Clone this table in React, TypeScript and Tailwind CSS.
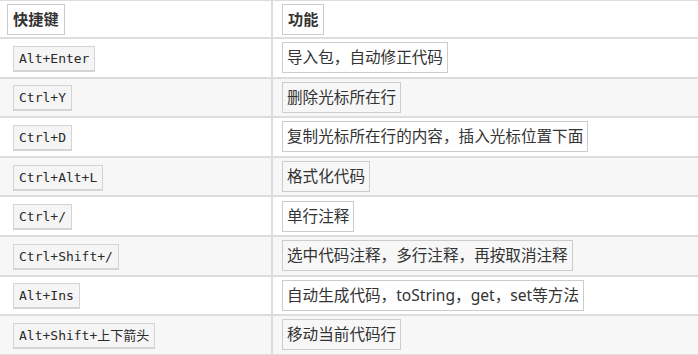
const rows: [string, string][] = [
  ['Alt+Enter', '导入包，自动修正代码'],
  ['Ctrl+Y', '删除光标所在行'],
  ['Ctrl+D', '复制光标所在行的内容，插入光标位置下面'],
  ['Ctrl+Alt+L', '格式化代码'],
  ['Ctrl+/', '单行注释'],
  ['Ctrl+Shift+/', '选中代码注释，多行注释，再按取消注释'],
  ['Alt+Ins', '自动生成代码，toString，get，set等方法'],
  ['Alt+Shift+上下箭头', '移动当前代码行'],
];

const sans = 'font-["Noto_Sans","Noto_Sans_CJK_SC",sans-serif]';

export default function App() {
  return (
    <div className="h-[355px] w-[698px] overflow-hidden bg-white text-[#333333]">
      <div className="border-t border-[#dddddd]">
        {/* header */}
        <div className="flex h-[38px] border-b-2 border-[#dddddd]">
          <div className="flex w-[273px] shrink-0 items-center border-r-2 border-[#dddddd] pl-[7px]">
            <span
              className={`border border-[#cccccc] px-[5px] py-[3px] text-[15.2px] leading-[23px] font-bold ${sans}`}
            >
              快捷键
            </span>
          </div>
          <div className="flex flex-1 items-center pl-[9px]">
            <span
              className={`border border-[#cccccc] px-[5px] py-[3px] text-[15.2px] leading-[23px] font-bold ${sans}`}
            >
              功能
            </span>
          </div>
        </div>

        {rows.map(([keys, desc], i) => (
          <div
            key={keys}
            className={`flex h-[39.6px] border-b-2 border-[#dddddd] ${i % 2 === 1 ? 'bg-[#f7f7f7]' : 'bg-white'}`}
          >
            <div className="flex w-[273px] shrink-0 items-center border-r-2 border-[#dddddd] pl-[13px] pt-[2px]">
              <code
                className='border border-b-2 border-[#d4d4d4] bg-[#f5f5f5] px-[5px] py-[3px] font-["DejaVu_Sans_Mono","Noto_Sans_CJK_SC",monospace] text-[13px] leading-[17px] text-[#2a2a2a]'
              >
                {keys}
              </code>
            </div>
            <div className="flex flex-1 items-center pl-[9px]">
              <span
                className={`border border-[#cccccc] px-[4px] py-[3px] text-[15.6px] leading-[23px] ${sans}`}
              >
                {desc}
              </span>
            </div>
          </div>
        ))}
      </div>
    </div>
  );
}
